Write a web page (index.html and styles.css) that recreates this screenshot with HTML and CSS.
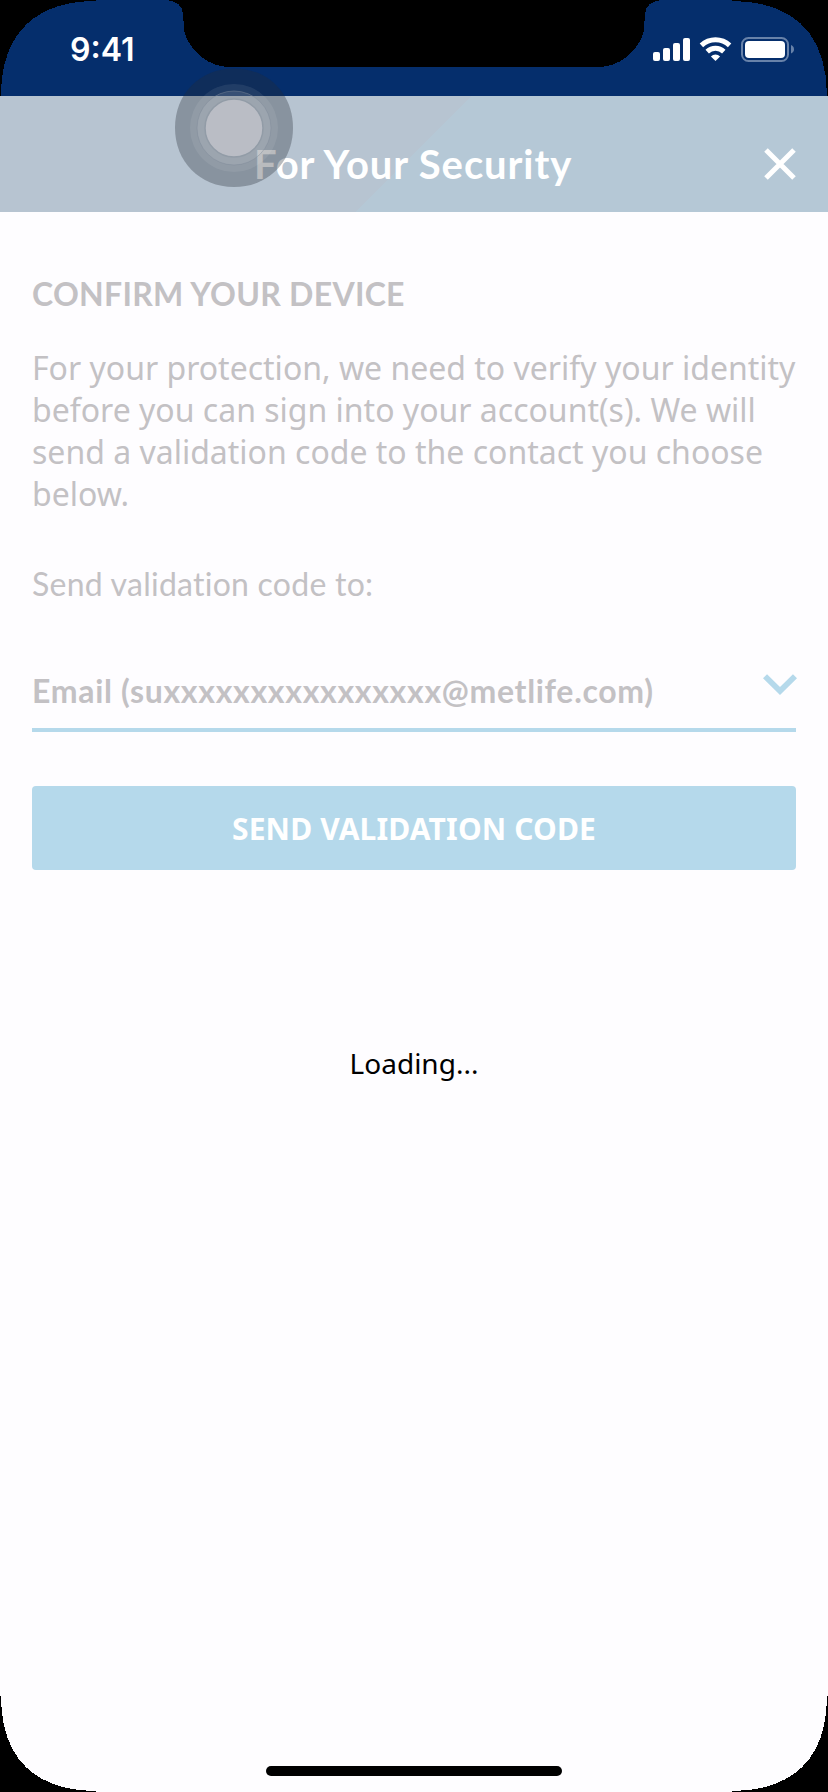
FILE: index.html
```html
<!DOCTYPE html>
<html lang="en">
<head>
<meta charset="utf-8">
<title>For Your Security</title>
<link rel="stylesheet" href="styles.css">
</head>
<body>
<div class="screen">
  <div class="status">
    <span class="clock">9:41</span>
    <svg class="status-icons" width="144" height="30" viewBox="652 34 144 30">
      <g fill="#fff">
        <rect x="653" y="52" width="7" height="9" rx="2"/>
        <rect x="663" y="48" width="7" height="13" rx="2"/>
        <rect x="673" y="43" width="7" height="18" rx="2"/>
        <rect x="683" y="38" width="7" height="23" rx="2"/>
        <path d="M715.5 61l-4.6-4.6a6.6 6.6 0 0 1 9.2 0z"/>
        <rect x="745" y="41" width="40" height="17" rx="4"/>
      </g>
      <g fill="none" stroke="#fff" stroke-width="5">
        <path d="M701.4 45.4a20.5 20.5 0 0 1 28.2 0"/>
        <path d="M707.2 51.6a12.1 12.1 0 0 1 16.6 0"/>
      </g>
      <rect x="742" y="38" width="46" height="23" rx="6.5" fill="none" stroke="#6882a9" stroke-width="2"/>
      <path d="M791 45q3 1.2 3 4.2t-3 4.2z" fill="#6882a9"/>
    </svg>
  </div>
  <header class="header">
    <h1 class="title">For Your Security</h1>
    <svg class="close" width="32" height="32" viewBox="0 0 32 32"><path d="M2 2l28 28M30 2L2 30" stroke="#fff" stroke-width="5"/></svg>
  </header>
  <main class="content">
    <h2 class="heading">CONFIRM YOUR DEVICE</h2>
    <p class="copy">For your protection, we need to verify your identity<br>before you can sign into your account(s). We will<br>send a validation code to the contact you choose<br>below.</p>
    <label class="label">Send validation code to:</label>
    <div class="select">
      <span class="value">Email (suxxxxxxxxxxxxxxxx@metlife.com)</span>
      <svg class="chevron" width="34" height="22" viewBox="0 0 34 22"><path d="M2 2.2L17 17L32 2.2" fill="none" stroke="#b5d9eb" stroke-width="5.8"/></svg>
    </div>
    <button class="send"><span class="send-text">SEND VALIDATION CODE</span></button>
    <p class="loading"><span class="loading-text">Loading...</span></p>
  </main>
  <svg class="touch" width="120" height="120" viewBox="174 67 120 120">
    <path d="M234 68.500C268.500 68.500 293 94 293 127.800S268.500 187 234 187S175 161.500 175 127.800S199.500 68.500 234 68.500z" fill="#252a34" fill-opacity=".32"/>
    <circle cx="234" cy="128" r="44" fill="#fff" fill-opacity=".08"/>
    <circle cx="234" cy="128" r="37" fill="#fff" fill-opacity=".1" stroke="#7f8a98" stroke-opacity=".45"/>
    <circle cx="234" cy="128" r="29" fill="#babdc5" stroke="#929ca7" stroke-width="1.500"/>
  </svg>
  <svg class="frame" width="828" height="1792" viewBox="0 0 828 1792" shape-rendering="crispEdges">
    <path d="M0 0H96V1C38 1 1 31 1 96H0zM828 0H732V1C790 1 827 31 827 96H828zM0 1792H96V1791C38 1791 1 1761 1 1696H0zM828 1792H732V1791C790 1791 827 1761 827 1696H828z"/>
    <path d="M166 0C177 1 182 5 183 14C184 24 183 30 186 37C194 54 209 66 228 67H600C619 66 634 54 642 37C645 30 644 24 645 14C646 5 651 1 662 0z"/>
  </svg>
  <div class="home"></div>
</div>
</body>
</html>
```
FILE: styles.css
```css
* { box-sizing: border-box; margin: 0; padding: 0; }
body { background: #fefdff; }
.screen {
  position: relative;
  width: 828px;
  height: 1792px;
  overflow: hidden;
  background: #fefdff;
  font-family: Lato, sans-serif;
  color: #c3c1c4;
  white-space: nowrap;
}
.status {
  height: 96px;
  padding: 0 32px 0 70px;
  display: flex;
  justify-content: space-between;
  background: #052e6c;
  color: #fff;
}
.clock { font: 600 32px/100px Inter, sans-serif; }
.status-icons { margin-top: 34px; }
.header {
  height: 116px;
  padding: 10px 32px 0 254px;
  display: flex;
  justify-content: space-between;
  background: linear-gradient(135deg, #b7c4d1 50%, #b5c8d6 50%);
  color: #fff;
}
.title { font-size: 40px; line-height: 116px; font-weight: 700; letter-spacing: 0.9px; }
.close { margin-top: 42px; }
.content { padding: 62px 32px 0; }
.heading { font-size: 32px; line-height: 40px; font-weight: 700; letter-spacing: 0.28px; }
.copy { margin-top: 33px; font: 32px/42px "Noto Sans", sans-serif; }
.label { display: block; margin-top: 49px; font-size: 32px; line-height: 40px; letter-spacing: 0.25px; }
.select {
  height: 61px;
  margin-top: 67px;
  display: flex;
  justify-content: space-between;
  border-bottom: 4px solid #b5d9eb;
}
.value { font-size: 32px; line-height: 40px; font-weight: 700; letter-spacing: 0.69px; }
.chevron { margin: 3px -1px 0 0; }
.send {
  display: block;
  width: 100%;
  height: 84px;
  margin-top: 54px;
  border: 0;
  border-radius: 4px;
  background: #b5d9eb;
  color: #fff;
  font: 700 30px/86px "Noto Sans", sans-serif;
  letter-spacing: 0.15px;
}
.loading {
  margin-top: 173px;
  text-align: center;
  color: #000;
  font: 28px/40px "Noto Sans", sans-serif;
}
.touch { position: absolute; left: 174px; top: 67px; }
.frame { position: absolute; left: 0; top: 0; }
.home {
  position: absolute;
  left: 266px;
  top: 1766px;
  width: 296px;
  height: 10px;
  border-radius: 5px;
  background: #000;
}
```
